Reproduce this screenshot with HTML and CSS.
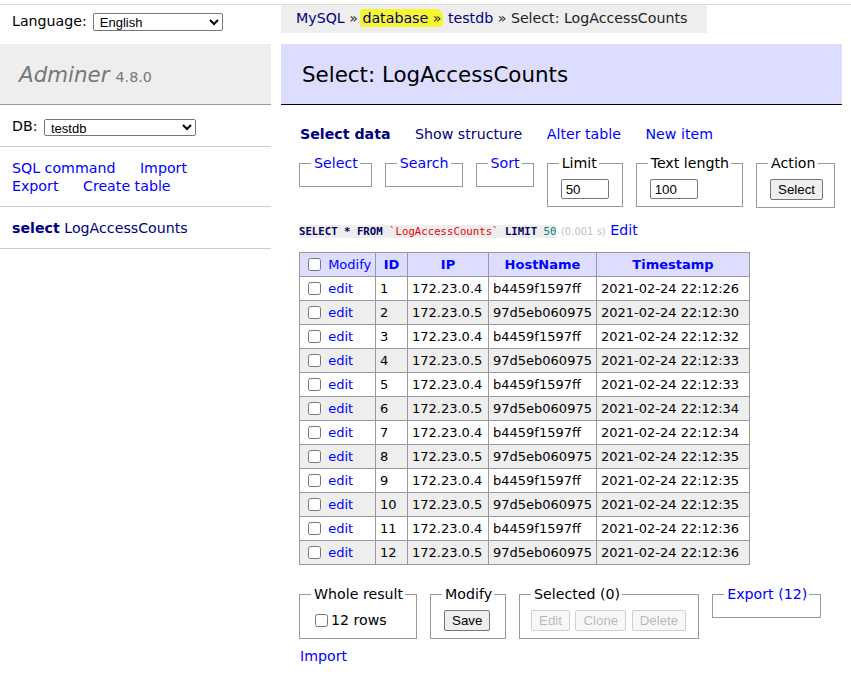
FILE: index.html
```html
<!DOCTYPE html>
<html lang="en">
<head>
<meta charset="utf-8">
<title>Select: LogAccessCounts - Adminer</title>
<link rel="stylesheet" href="styles.css">
</head>
<body>
<div class="chrome"></div>
<div class="topbar">
  <div class="lang">Language:<select class="lang-select"><option>English</option></select></div>
  <div class="breadcrumb"><a class="v" href="#">MySQL</a> » <span class="marker"><a class="v" href="#">database</a> »</span> <a class="v" href="#">testdb</a> » Select: LogAccessCounts</div>
</div>
<div class="layout">
  <aside class="menu">
    <h1 class="logo"><a class="h1link" href="#">Adminer</a> <span class="version">4.8.0</span></h1>
    <div class="menu-p dbs">DB: <select class="db-select"><option>testdb</option></select></div>
    <div class="menu-p links"><a href="#">SQL command</a> <a href="#">Import</a><br><a href="#">Export</a> <a href="#">Create table</a></div>
    <div class="menu-p tables"><a class="v active" href="#">select</a> <a class="v" href="#">LogAccessCounts</a></div>
  </aside>
  <main class="content">
    <h2 class="title">Select: LogAccessCounts</h2>
    <p class="links toplinks"><a class="v active" href="#">Select data</a> <a class="v" href="#">Show structure</a> <a href="#">Alter table</a> <a href="#">New item</a></p>
    <form class="filters">
      <fieldset class="fs"><legend><a href="#">Select</a></legend></fieldset>
      <fieldset class="fs"><legend><a href="#">Search</a></legend></fieldset>
      <fieldset class="fs"><legend><a href="#">Sort</a></legend></fieldset>
      <fieldset class="fs"><legend>Limit</legend><input class="size" type="text" value="50"></fieldset>
      <fieldset class="fs"><legend>Text length</legend><input class="size" type="text" value="100"></fieldset>
      <fieldset class="fs"><legend>Action</legend><button type="button" class="btn">Select</button></fieldset>
    </form>
    <p class="query"><code class="sql"><b class="kw">SELECT</b> <b class="kw">*</b> <b class="kw">FROM</b> <span class="bac">`LogAccessCounts`</span> <b class="kw">LIMIT</b> <span class="num">50</span></code> <span class="time">(0.001 s)</span> <a href="#">Edit</a></p>
    <table class="data">
      <colgroup><col class="c1"><col class="c2"><col class="c3"><col class="c4"><col class="c5"></colgroup>
      <thead>
        <tr><td><input type="checkbox" class="cb"> <a href="#">Modify</a></td><th><a href="#">ID</a></th><th><a href="#">IP</a></th><th><a href="#">HostName</a></th><th><a href="#">Timestamp</a></th></tr>
      </thead>
      <tbody>
        <tr><td><input type="checkbox" class="cb"> <a href="#">edit</a></td><td>1</td><td>172.23.0.4</td><td>b4459f1597ff</td><td>2021-02-24 22:12:26</td></tr>
        <tr><td><input type="checkbox" class="cb"> <a href="#">edit</a></td><td>2</td><td>172.23.0.5</td><td>97d5eb060975</td><td>2021-02-24 22:12:30</td></tr>
        <tr><td><input type="checkbox" class="cb"> <a href="#">edit</a></td><td>3</td><td>172.23.0.4</td><td>b4459f1597ff</td><td>2021-02-24 22:12:32</td></tr>
        <tr><td><input type="checkbox" class="cb"> <a href="#">edit</a></td><td>4</td><td>172.23.0.5</td><td>97d5eb060975</td><td>2021-02-24 22:12:33</td></tr>
        <tr><td><input type="checkbox" class="cb"> <a href="#">edit</a></td><td>5</td><td>172.23.0.4</td><td>b4459f1597ff</td><td>2021-02-24 22:12:33</td></tr>
        <tr><td><input type="checkbox" class="cb"> <a href="#">edit</a></td><td>6</td><td>172.23.0.5</td><td>97d5eb060975</td><td>2021-02-24 22:12:34</td></tr>
        <tr><td><input type="checkbox" class="cb"> <a href="#">edit</a></td><td>7</td><td>172.23.0.4</td><td>b4459f1597ff</td><td>2021-02-24 22:12:34</td></tr>
        <tr><td><input type="checkbox" class="cb"> <a href="#">edit</a></td><td>8</td><td>172.23.0.5</td><td>97d5eb060975</td><td>2021-02-24 22:12:35</td></tr>
        <tr><td><input type="checkbox" class="cb"> <a href="#">edit</a></td><td>9</td><td>172.23.0.4</td><td>b4459f1597ff</td><td>2021-02-24 22:12:35</td></tr>
        <tr><td><input type="checkbox" class="cb"> <a href="#">edit</a></td><td>10</td><td>172.23.0.5</td><td>97d5eb060975</td><td>2021-02-24 22:12:35</td></tr>
        <tr><td><input type="checkbox" class="cb"> <a href="#">edit</a></td><td>11</td><td>172.23.0.4</td><td>b4459f1597ff</td><td>2021-02-24 22:12:36</td></tr>
        <tr><td><input type="checkbox" class="cb"> <a href="#">edit</a></td><td>12</td><td>172.23.0.5</td><td>97d5eb060975</td><td>2021-02-24 22:12:36</td></tr>
      </tbody>
    </table>
    <div class="footer">
      <fieldset class="fs"><legend>Whole result</legend><label class="all"><input type="checkbox" class="cb">12 rows</label></fieldset>
      <fieldset class="fs"><legend>Modify</legend><button type="button" class="btn">Save</button></fieldset>
      <fieldset class="fs"><legend>Selected (0)</legend><button type="button" class="btn" disabled>Edit</button> <button type="button" class="btn" disabled>Clone</button> <button type="button" class="btn" disabled>Delete</button></fieldset>
      <fieldset class="fs"><legend><a href="#">Export (12)</a></legend></fieldset>
    </div>
    <p class="import"><a href="#">Import</a></p>
  </main>
</div>
</body>
</html>
```

FILE: styles.css
```css
html, body {
  margin: 0;
  padding: 0;
  background: #fff;
}
body {
  width: 851px;
  color: #000;
  font: 14.2px/1.25 "DejaVu Sans", Verdana, sans-serif;
}
a {
  color: #00f;
  text-decoration: none;
}
a.v {
  color: navy;
}
.chrome {
  height: 4px;
  border-bottom: 1px solid #dcdcdc;
}
.topbar {
  display: flex;
  height: 39px;
  align-items: flex-start;
}
.lang {
  width: 281px;
  box-sizing: border-box;
  padding: 4px 12px;
  line-height: 25px;
}
select {
  font: 13px "Liberation Sans", Arial, sans-serif;
  color: #000;
  background: #fff;
  border: 1px solid #767676;
  border-radius: 2px;
  vertical-align: middle;
  padding: 0 0 0 2px;
}
.lang-select {
  margin-left: 6px;
  width: 130px;
  height: 18px;
}
.breadcrumb {
  background: #eee;
  height: 28px;
  line-height: 26px;
  padding: 0 20px 0 15px;
  white-space: nowrap;
  color: #222;
}
.marker {
  background: #f6f62e;
  border-radius: 3px 7px 5px 2px;
  padding: 1px 2px 1px 2px;
  margin-left: -2px;
}
.layout {
  display: grid;
  grid-template-columns: 271px 543px;
  column-gap: 28px;
}
.logo {
  margin: 0;
  box-sizing: border-box;
  height: 61px;
  background: #eee;
  border-bottom: 1px solid #999;
  color: #777;
  font-weight: normal;
  font-size: 21.4px;
  line-height: 26px;
  padding: 1px 19px 0;
  display: flex;
  align-items: center;
  gap: 6px;
}
.h1link {
  color: #777;
  font-style: italic;
}
.version {
  font-size: 14.3px;
  color: #777;
  padding-top: 5px;
}
.menu-p {
  margin: 0;
  padding: 12px 12px 11px;
  border-bottom: 1px solid #ccc;
  line-height: 18px;
  white-space: nowrap;
}
.dbs {
  line-height: 20px;
  padding: 11px 12px 10px;
}
.db-select {
  width: 152px;
  height: 17px;
  margin-left: 2px;
}
.links a {
  margin-right: 20px;
}
.active {
  font-weight: bold;
}
.title {
  margin: 0 0 20px -18px;
  height: 61px;
  box-sizing: border-box;
  padding: 2px 21px 0;
  display: flex;
  align-items: center;
  font-size: 21.4px;
  font-weight: normal;
  background: #ddf;
  border-bottom: 1px solid #000;
  color: #000;
}
.toplinks {
  margin: 0;
  padding-left: 1px;
  line-height: 18px;
}
.filters {
  margin: 0;
  font-size: 0;
  white-space: nowrap;
}
.fs {
  display: inline-block;
  vertical-align: top;
  margin: 11px 13px 0 0;
  padding: 7px 11px 7px;
  border: 1px solid #999;
  min-width: 0;
  font-size: 14.2px;
  line-height: 18px;
  white-space: nowrap;
}
.fs legend {
  padding: 0 2px 0 3px;
  line-height: 18px;
}
.size {
  width: 48px;
  height: 20px;
  box-sizing: border-box;
  border: 1px solid #767676;
  border-radius: 2px;
  font: 13.3px "Liberation Sans", Arial, sans-serif;
  padding: 1px 4px;
  vertical-align: top;
  margin: 0 2px;
}
.btn {
  font: 13.3px "Liberation Sans", Arial, sans-serif;
  height: 21px;
  padding: 1px 7px;
  border: 1px solid #767676;
  border-radius: 2px;
  background: #efefef;
  color: #000;
  vertical-align: top;
  margin: 0 0 0 2px;
}
.btn:disabled {
  color: rgba(16, 16, 16, 0.3);
  border-color: rgba(118, 118, 118, 0.3);
  background: rgba(239, 239, 239, 0.5);
  padding: 1px 7px;
  margin: 0 1px 0 0;
}
.query {
  margin: 13px 0 0;
  line-height: 18px;
}
.sql {
  background: #eee;
  font: 10.7px/1.25 "DejaVu Sans Mono", monospace;
  color: #000;
}
.kw {
  color: #000060;
}
.bac {
  color: #e00;
}
.num {
  color: #007f7f;
}
.time {
  color: silver;
  font-size: 10px;
}
.data {
  margin: 11px 0 0;
  border-collapse: collapse;
  table-layout: fixed;
  width: 450px;
  font-size: 13px;
}
.c1 { width: 76px; }
.c2 { width: 32px; }
.c3 { width: 81px; }
.c4 { width: 108px; }
.c5 { width: 153px; }
.data td, .data th {
  border: 1px solid #999;
  padding: 3px 4px;
  line-height: 17px;
  height: 17px;
  white-space: nowrap;
  text-align: left;
}
.data thead td, .data thead th {
  background: #ddf;
}
.data thead th {
  text-align: center;
  font-weight: bold;
}
.data tbody tr:nth-child(2n) {
  background: #eee;
}
.cb {
  width: 13px;
  height: 13px;
  margin: 0 3px 0 4px;
  vertical-align: -2px;
}
.footer {
  padding-top: 20px;
  font-size: 0;
  white-space: nowrap;
}
.footer .fs {
  margin: 0 13px 0 0;
}
.all {
  display: inline-block;
  line-height: 21px;
}
.all .cb {
  margin: 0 3px 0 4px;
}
.import {
  margin: 8px 0 0;
  padding-left: 1px;
  line-height: 18px;
}
```
